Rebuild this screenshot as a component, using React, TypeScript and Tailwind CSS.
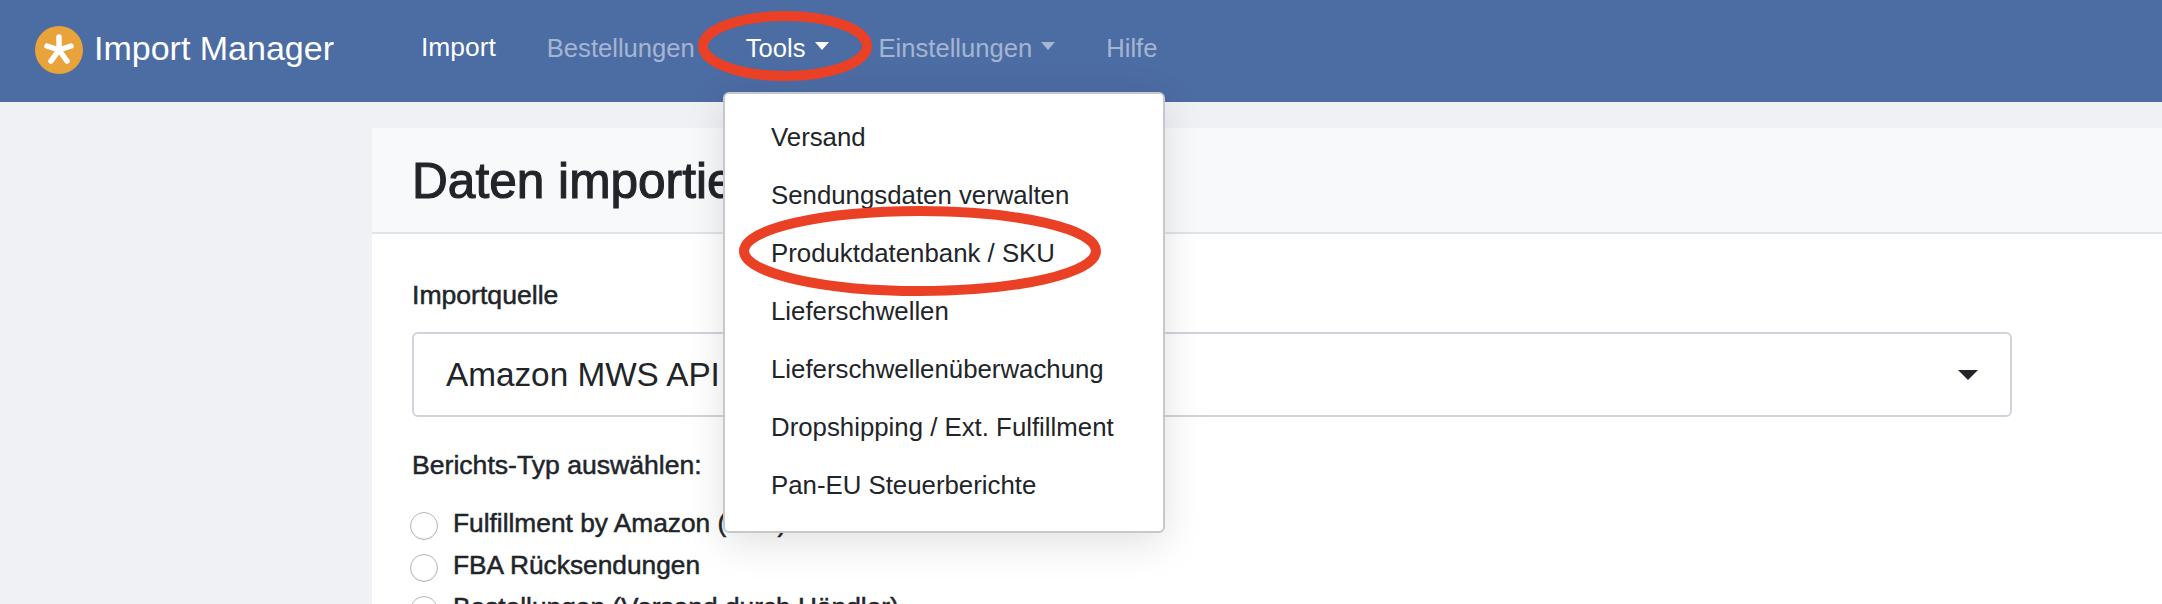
import React from "react";

const menuItems = [
  "Versand",
  "Sendungsdaten verwalten",
  "Produktdatenbank / SKU",
  "Lieferschwellen",
  "Lieferschwellenüberwachung",
  "Dropshipping / Ext. Fulfillment",
  "Pan-EU Steuerberichte",
];

const reportTypes = [
  "Fulfillment by Amazon (FBA)",
  "FBA Rücksendungen",
  "Bestellungen (Versand durch Händler)",
];

const Caret = () => (
  <span className="ml-[9px] mt-[-3px] inline-block border-x-[7px] border-t-[8px] border-x-transparent border-t-current" />
);

const App = () => {
  return (
    <div className="relative h-[604px] w-full overflow-hidden bg-[#f0f1f5] font-['Liberation_Sans',Arial,sans-serif] text-[25.6px] text-[#212529]">
      {/* Navbar */}
      <nav className="flex h-[102px] items-center bg-[#4c6ca4] pl-[35px]">
        <div className="flex items-center text-white">
          <svg width="48" height="48" viewBox="0 0 48 48" className="mt-[-2px]">
            <circle cx="24" cy="24" r="24" fill="#e8a33a" />
            <g stroke="#ffffff" strokeWidth="5.5" strokeLinecap="round">
              <line x1="24" y1="24" x2="24" y2="11" />
              <line x1="24" y1="24" x2="36" y2="20" />
              <line x1="24" y1="24" x2="32" y2="35" />
              <line x1="24" y1="24" x2="16" y2="35" />
              <line x1="24" y1="24" x2="12" y2="20" />
            </g>
          </svg>
          <span className="ml-[11px] mt-[-6px] text-[34px]">Import Manager</span>
        </div>
        <div className="ml-[87px] mt-[-6px] flex items-center gap-[51px]">
          <a className="text-[26.4px] text-white">Import</a>
          <a className="text-white/50">Bestellungen</a>
          <a className="mr-[-1px] flex items-center text-white">
            Tools
            <Caret />
          </a>
          <a className="flex items-center text-white/50">
            Einstellungen
            <Caret />
          </a>
          <a className="text-white/50">Hilfe</a>
        </div>
      </nav>

      {/* Card */}
      <main className="ml-[372px] mt-[26px] bg-white">
        <div className="flex h-[106px] items-center border-b-2 border-[#e1e3e6] bg-[#f8f9fb] pl-[40px] pt-[3px]">
          <h1 className="text-[49.6px] font-medium [-webkit-text-stroke:1.1px_#212529]">Daten importieren</h1>
        </div>
        <div className="pl-[40px] pt-[46px]">
          <label className="block text-[26.6px] leading-[30px] [-webkit-text-stroke:0.5px_#212529]">Importquelle</label>
          <div className="mt-[22px] flex h-[85px] w-[1600px] items-center justify-between rounded-[6px] border-2 border-[#ced4da] bg-white pl-[32px] pr-[32px] text-[33.3px]">
            <span>Amazon MWS API</span>
            <span className="border-x-[10px] border-t-[10px] border-x-transparent border-t-[#212529]" />
          </div>
          <p className="mt-[33px] text-[26.6px] leading-[30px] [-webkit-text-stroke:0.5px_#212529]">Berichts-Typ auswählen:</p>
          <ul className="mt-[32px] flex flex-col gap-[14px]">
            {reportTypes.map((type) => (
              <li key={type} className="flex h-[28px] items-center">
                <span className="ml-[-2px] h-[28px] w-[28px] rounded-full border border-[#b5b5b5] bg-white shadow-[inset_0_-1px_1px_rgba(0,0,0,0.08)]" />
                <span className="ml-[15px] mt-[-7px] text-[26.3px] leading-[28px] [-webkit-text-stroke:0.5px_#212529]">{type}</span>
              </li>
            ))}
          </ul>
        </div>
      </main>

      {/* Tools dropdown */}
      <div className="absolute left-[723px] top-[92px] w-[442px] rounded-[6px] border-2 border-[#c6c8cb] bg-white pb-[17px] pt-[14px] text-[25.8px] shadow-[0_10px_40px_rgba(0,0,0,0.12)]">
        {menuItems.map((item) => (
          <div key={item} className="flex h-[58px] items-center pl-[46px]">
            {item}
          </div>
        ))}
      </div>

      {/* Red annotations */}
      <svg className="absolute left-0 top-0" width="2162" height="604" fill="none" stroke="#ea4126" strokeWidth="10">
        <ellipse cx="785" cy="46" rx="82" ry="30" />
        <ellipse cx="920" cy="251" rx="176" ry="40" />
      </svg>
    </div>
  );
};

export default App;
